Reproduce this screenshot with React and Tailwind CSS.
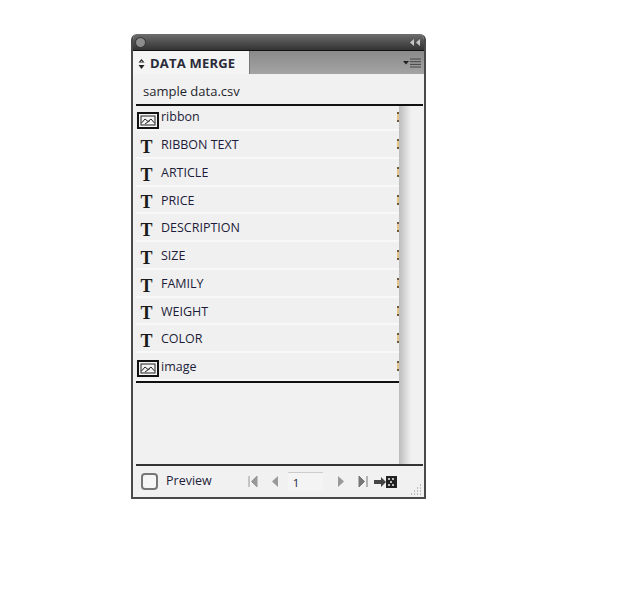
const fields = [
  { name: 'ribbon', type: 'image' },
  { name: 'RIBBON TEXT', type: 'text' },
  { name: 'ARTICLE', type: 'text' },
  { name: 'PRICE', type: 'text' },
  { name: 'DESCRIPTION', type: 'text' },
  { name: 'SIZE', type: 'text' },
  { name: 'FAMILY', type: 'text' },
  { name: 'WEIGHT', type: 'text' },
  { name: 'COLOR', type: 'text' },
  { name: 'image', type: 'image' },
]

const ImageIcon = () => (
  <svg width="22" height="17" viewBox="0 0 22 17" className="shrink-0">
    <rect x="1" y="1" width="20" height="15" fill="#f4f4f4" stroke="#111" strokeWidth="2" />
    <rect x="4" y="4" width="14" height="9" fill="#f4f4f4" stroke="#222" strokeWidth="1" />
    <path d="M4.5 11 L8 7 L11 9.5 L14 7 L17.5 11 M8 12 L13 8.5" fill="none" stroke="#222" strokeWidth="1" />
  </svg>
)

const Row = ({ field, first }) => (
  <div className={`${first ? 'h-[25px]' : 'h-[27.75px]'} shrink-0 flex items-center bg-[#f0f0f0] border-b-2 border-[#f8f8f8] relative`}>
    {field.type === 'image' ? (
      <div className="w-[25px] pl-[1px] pt-[5px]"><ImageIcon /></div>
    ) : (
      <div className="w-[25px] pr-[4px] pt-[6px] text-center font-['Liberation_Serif',serif] font-bold text-[18px] leading-none text-[#1a1a1a]">T</div>
    )}
    <span className={`text-[12.5px] text-[#1d1d3a] ${first ? '' : 'pt-[3px]'}`}>{field.name}</span>
    {/* status marker, cut off by the scroller */}
    <span className={`absolute right-0 ${first ? 'top-[6px]' : 'top-[8px]'} w-[2px] h-[10px] border-y-2 border-[#6b5a3c] bg-[#e3c48a]`} />
  </div>
)

const App = () => {
  return (
    <div className="min-h-screen bg-white pt-[34px] pl-[131px] font-['Open_Sans','Liberation_Sans',sans-serif]">
      <div className="w-[295px] h-[465px] flex flex-col bg-[#f1f1f1] border-x-2 border-b-2 border-[#4a4a4a] rounded-t-[6px] overflow-hidden">
        {/* Title bar */}
        <div className="h-[17px] shrink-0 flex items-center justify-between px-[2px] bg-gradient-to-b from-[#6e6e6e] to-[#333] border-b border-[#111]">
          <div className="w-[11px] h-[11px] rounded-full bg-[#8c8c8c] border border-[#333]" />
          <svg width="12" height="7" viewBox="0 0 12 7" className="mr-[1px]">
            <path d="M5 0 L1 3.5 L5 7 Z M11 0 L7 3.5 L11 7 Z" fill="#c8c8c8" />
          </svg>
        </div>

        {/* Tab strip */}
        <div className="h-[23px] shrink-0 flex">
          <div className="w-[116px] flex items-center gap-[5px] pl-[5px] pt-[2px] bg-[#f4f4f4]">
            <svg width="7" height="10" viewBox="0 0 7 10">
              <path d="M3.5 0 L6.5 3.5 H0.5 Z M0.5 6 H6.5 L3.5 10 Z M3.5 2 L2.5 3 H4.5 Z" fill="#222" />
            </svg>
            <span className="text-[13px] font-bold tracking-[0.2px] text-[#2a2a38]">DATA MERGE</span>
          </div>
          <div className="flex-1 flex items-center justify-end pr-[2px] bg-gradient-to-b from-[#8a8a8a] to-[#a4a4a4] border-l border-[#777]">
            <svg width="19" height="10" viewBox="0 0 19 10">
              <path d="M0 3 H6 L3 6.5 Z" fill="#222" />
              <path d="M7 1 H18 M7 3.7 H18 M7 6.4 H18 M7 9 H18" stroke="#444" strokeWidth="1" />
            </svg>
          </div>
        </div>

        {/* Data source */}
        <div className="h-[30px] shrink-0 flex items-center pl-[10px] pt-[6px] text-[13px] text-[#1f1f2e]">sample data.csv</div>

        {/* Field list */}
        <div className="flex-1 min-h-0 flex ml-[3px] mr-[1px] border-t-2 border-[#111]">
          <div className="w-[263px] shrink-0 flex flex-col">
            <div className="flex flex-col border-b-2 border-[#111]">
              {fields.map((field, i) => (
                <Row key={field.name} field={field} first={i === 0} />
              ))}
            </div>
          </div>
          <div className="w-[12px] shrink-0 bg-gradient-to-r from-[#bcbcbc] to-[#f0f0f0]" />
          <div className="flex-1" />
        </div>

        {/* Footer */}
        <div className="h-[33px] shrink-0 ml-[3px] mr-[1px] flex items-center border-t-2 border-[#333] relative text-[12.5px] text-[#1d1d3a]">
          <div className="ml-[5px] w-[17px] h-[17px] rounded-[4px] bg-[#f6f6f6] border-2 border-[#777]" />
          <span className="ml-[8px]">Preview</span>
          <div className="ml-[36px] flex items-center">
            <svg width="10" height="11" viewBox="0 0 10 11"><path d="M1 0 V11 M9 0 L3.5 5.5 L9 11 Z" stroke="#999" fill="#999" /></svg>
            <svg width="7" height="11" viewBox="0 0 7 11" className="ml-[13px]"><path d="M7 0 L1 5.5 L7 11 Z" fill="#999" /></svg>
            <div className="ml-[10px] w-[35px] h-[19px] bg-[#f4f4f4] border-t border-[#ccc] pl-[5px] text-[11.5px] leading-[19px]">1</div>
            <svg width="7" height="11" viewBox="0 0 7 11" className="ml-[15px]"><path d="M0 0 L6 5.5 L0 11 Z" fill="#999" /></svg>
            <svg width="10" height="11" viewBox="0 0 10 11" className="ml-[13px]"><path d="M9 0 V11 M1 0 L6.5 5.5 L1 11 Z" stroke="#777" fill="#777" /></svg>
            <svg width="24" height="14" viewBox="0 0 24 14" className="ml-[6px]">
              <path d="M0 5 H7 V2 L12 7 L7 12 V9 H0 Z" fill="#444" />
              <rect x="12" y="1" width="11" height="12" fill="#222" />
              <path d="M14 4 h2 M18 4 h2 M16 7 h2 M14 10 h2 M18 10 h2" stroke="#eee" strokeWidth="1.5" />
            </svg>
          </div>
          <svg width="14" height="12" viewBox="0 0 14 12" className="absolute right-[1px] bottom-[1px]">
            <path d="M12 1 h1 M9 4 h1 M12 4 h1 M6 7 h1 M9 7 h1 M12 7 h1 M3 10 h1 M6 10 h1 M9 10 h1 M12 10 h1" stroke="#aaa" strokeWidth="1.5" />
          </svg>
        </div>
      </div>
    </div>
  )
}

export default App
